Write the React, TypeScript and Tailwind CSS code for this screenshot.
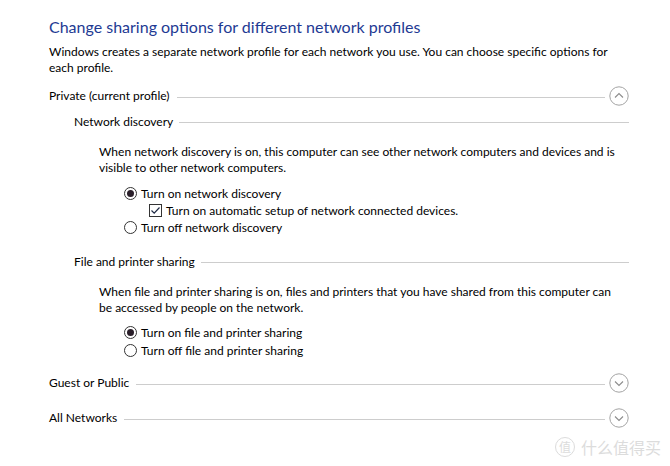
function CircleChevron({ up }: { up?: boolean }) {
  return (
    <svg width="20" height="20" viewBox="0 0 20 20" className="shrink-0">
      <circle cx="10" cy="10" r="9.2" fill="white" stroke="#a3a3a3" strokeWidth="1" />
      {up ? (
        <path d="M6 11.5 L10 7.5 L14 11.5" fill="none" stroke="#8c8c8c" strokeWidth="1.1" />
      ) : (
        <path d="M6 8.5 L10 12.5 L14 8.5" fill="none" stroke="#8c8c8c" strokeWidth="1.1" />
      )}
    </svg>
  );
}

function Radio({ checked, label }: { checked?: boolean; label: string }) {
  return (
    <div className="flex items-center h-[17px]">
      <div className="w-[13px] h-[13px] rounded-full border border-[#333333] bg-white flex items-center justify-center shrink-0">
        {checked && <div className="w-[7px] h-[7px] rounded-full bg-[#2a1f2a]" />}
      </div>
      <span className="ml-[4px] whitespace-nowrap">{label}</span>
    </div>
  );
}

function Checkbox({ checked, label }: { checked?: boolean; label: string }) {
  return (
    <div className="flex items-center h-[17px]">
      <div className="w-[13px] h-[13px] border border-[#333333] bg-white flex items-center justify-center shrink-0">
        {checked && (
          <svg width="11" height="11" viewBox="0 0 11 11">
            <path d="M1.5 5.5 L4.2 8.2 L9.5 2.5" fill="none" stroke="#1f2a44" strokeWidth="1.2" />
          </svg>
        )}
      </div>
      <span className="ml-[4px] whitespace-nowrap">{label}</span>
    </div>
  );
}

function ProfileHeader({ label, up }: { label: string; up?: boolean }) {
  return (
    <div className="flex items-center h-[20px]">
      <span className="whitespace-nowrap">{label}</span>
      <div className="flex-1 h-px bg-[#cdcdcd] ml-[7px] mr-[4px] mt-[3px]" />
      <CircleChevron up={up} />
    </div>
  );
}

function SubHeader({ label }: { label: string }) {
  return (
    <div className="flex items-center h-[20px] pl-[25px]">
      <span className="whitespace-nowrap">{label}</span>
      <div className="flex-1 h-px bg-[#cdcdcd] ml-[6px] mt-[1px]" />
    </div>
  );
}

export default function App() {
  return (
    <div className="relative w-[670px] h-[466px] bg-white text-black text-[12px] leading-[16px] font-['Lato',sans-serif] overflow-hidden">
      <div className="flex flex-col pl-[49px] pr-[41px] pt-[17px]">
        <h1 className="text-[16px] leading-[20px] text-[#1e3a93] whitespace-nowrap">
          Change sharing options for different network profiles
        </h1>
        <p className="mt-[7px]">
          Windows creates a separate network profile for each network you use. You can choose specific options for
          <br />
          each profile.
        </p>

        <div className="mt-[10px]">
          <ProfileHeader label="Private (current profile)" up />
        </div>

        <div className="mt-[6px]">
          <SubHeader label="Network discovery" />
        </div>
        <p className="mt-[12px] pl-[50px] whitespace-nowrap">
          When network discovery is on, this computer can see other network computers and devices and is
          <br />
          visible to other network computers.
        </p>
        <div className="mt-[9px] pl-[75px] flex flex-col">
          <Radio checked label="Turn on network discovery" />
          <div className="pl-[25px]">
            <Checkbox checked label="Turn on automatic setup of network connected devices." />
          </div>
          <Radio label="Turn off network discovery" />
        </div>

        <div className="mt-[16px]">
          <SubHeader label="File and printer sharing" />
        </div>
        <p className="mt-[12px] pl-[50px] whitespace-nowrap">
          When file and printer sharing is on, files and printers that you have shared from this computer can
          <br />
          be accessed by people on the network.
        </p>
        <div className="mt-[8px] pl-[75px] flex flex-col gap-[1px]">
          <Radio checked label="Turn on file and printer sharing" />
          <Radio label="Turn off file and printer sharing" />
        </div>

        <div className="mt-[14px]">
          <ProfileHeader label="Guest or Public" />
        </div>
        <div className="mt-[15px]">
          <ProfileHeader label="All Networks" />
        </div>
      </div>

      <div className="absolute right-[9px] bottom-[9px] flex items-center gap-[6px] text-[#dcdcdc] font-['Noto_Sans_CJK_SC',sans-serif]">
        <div className="w-[20px] h-[20px] rounded-full border-[1.5px] border-[#dcdcdc] flex items-center justify-center text-[12px] leading-none">
          值
        </div>
        <span className="text-[16px] leading-[20px]">什么值得买</span>
      </div>
    </div>
  );
}
